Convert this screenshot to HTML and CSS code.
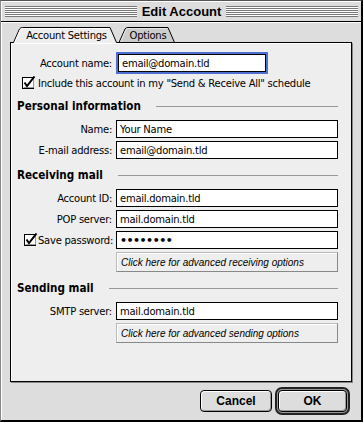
FILE: index.html
```html
<!DOCTYPE html>
<html lang="en">
<head>
    <meta charset="UTF-8">
    <title>Edit Account</title>
    <link rel="stylesheet" href="styles.css">
</head>
<body>

<div class="window">
    <div class="titlebar">
        <span class="stripes"></span>
        <span class="title">Edit Account</span>
        <span class="stripes"></span>
    </div>

    <div class="content">
        <div class="tabs">
            <div class="tab tab-active">
                <svg class="tab-shape" width="108" height="16" viewBox="0 0 108 16">
                    <path d="M3.5 16 L9.5 2 Q10.5 0.5 12.5 0.5 H100 L106.5 16 Z" fill="#eeeeee"/>
                    <path d="M3.5 15.5 L9.5 2 Q10.5 0.5 12.5 0.5 H100 L106.5 15.5" fill="none" stroke="#000"/>
                    <path d="M5 15 L10.5 2.5 Q11.5 1.5 12.5 1.5 H99" fill="none" stroke="#fff"/>
                </svg>
                <span class="tab-label">Account Settings</span>
            </div>
            <div class="tab">
                <svg class="tab-shape" width="62" height="16" viewBox="0 0 62 16">
                    <path d="M3 15 L9 2 Q10 0.5 12 0.5 H52 L58.5 15 Z" fill="#cccccc"/>
                    <path d="M3 15.5 L9 2 Q10 0.5 12 0.5 H52 L58.5 15.5" fill="none" stroke="#000"/>
                    <path d="M4.5 15 L10 2.5 Q11 1.5 12 1.5 H51" fill="none" stroke="#e6e6e6"/>
                </svg>
                <span class="tab-label">Options</span>
            </div>
        </div>

        <div class="panel">
            <div class="row">
                <label class="field-label">Account name:</label>
                <input class="field field-short field-focus" type="text" value="email@domain.tld">
            </div>
            <div class="check-row">
                <svg class="checkbox" width="14" height="14" viewBox="0 0 14 14">
                    <rect x="0.5" y="1.5" width="11" height="11" fill="#fff" stroke="#000"/>
                    <path d="M1.5 11.5 H11.5 V2.5" fill="none" stroke="#999"/>
                    <path d="M2.5 6.5 L5 10 L12.5 0.5" fill="none" stroke="#000" stroke-width="2"/>
                </svg>
                <span>Include this account in my "Send &amp; Receive All" schedule</span>
            </div>

            <div class="section">Personal information</div>
            <div class="row">
                <label class="field-label">Name:</label>
                <input class="field" type="text" value="Your Name">
            </div>
            <div class="row row-next">
                <label class="field-label">E-mail address:</label>
                <input class="field" type="text" value="email@domain.tld">
            </div>

            <div class="section">Receiving mail</div>
            <div class="row">
                <label class="field-label">Account ID:</label>
                <input class="field" type="text" value="email.domain.tld">
            </div>
            <div class="row row-next">
                <label class="field-label">POP server:</label>
                <input class="field" type="text" value="mail.domain.tld">
            </div>
            <div class="row row-next">
                <label class="field-label field-label-check">
                    <svg class="checkbox" width="14" height="14" viewBox="0 0 14 14">
                        <rect x="0.5" y="1.5" width="11" height="11" fill="#fff" stroke="#000"/>
                        <path d="M1.5 11.5 H11.5 V2.5" fill="none" stroke="#999"/>
                        <path d="M2.5 6.5 L5 10 L12.5 0.5" fill="none" stroke="#000" stroke-width="2"/>
                    </svg>
                    <span>Save password:</span>
                </label>
                <input class="field field-password" type="text" value="&#8226;&#8226;&#8226;&#8226;&#8226;&#8226;&#8226;&#8226;">
            </div>
            <button class="adv-btn">Click here for advanced receiving options</button>

            <div class="section">Sending mail</div>
            <div class="row">
                <label class="field-label">SMTP server:</label>
                <input class="field" type="text" value="mail.domain.tld">
            </div>
            <button class="adv-btn">Click here for advanced sending options</button>
        </div>

        <div class="actions">
            <button class="btn">Cancel</button>
            <span class="default-ring"><button class="btn btn-ok">OK</button></span>
        </div>
    </div>
</div>

</body>
</html>
```

FILE: styles.css
```css
* {
    box-sizing: border-box;
}

body {
    margin: 0;
    font-family: 'DejaVu Sans', sans-serif;
    font-size: 10px;
    letter-spacing: -0.25px;
    color: #000;
    background-color: #dddddd;
}

.window {
    width: 363px;
    height: 422px;
    display: flex;
    flex-direction: column;
    background-color: #dddddd;
    border-style: solid;
    border-width: 1px 2px 2px 1px;
    border-color: #555 #000 #000 #888;
}

/* title bar */
.titlebar {
    height: 21px;
    display: flex;
    align-items: center;
    padding: 0 3px 0 4px;
    border-bottom: 1px solid #000;
    box-shadow: inset 1px 1px 0 #fff;
}

.stripes {
    flex: 1;
    height: 11px;
    background: repeating-linear-gradient(to bottom, #777 0 1px, #fff 1px 2px);
}

.title {
    padding: 0 5px;
    font-family: 'Liberation Sans', sans-serif;
    font-weight: bold;
    font-size: 13px;
    letter-spacing: 0;
}

/* window body */
.content {
    flex: 1;
    display: flex;
    flex-direction: column;
    padding: 5px 9px 5px 9px;
    box-shadow: inset 1px 1px 0 #fff;
}

.tabs {
    display: flex;
    height: 16px;
    position: relative;
    z-index: 1;
}

.tab {
    position: relative;
    width: 62px;
    height: 16px;
    display: flex;
    align-items: center;
    justify-content: center;
    margin-left: -2px;
    padding: 2px 0 0 2px;
}

.tab-active {
    width: 108px;
    margin-left: 0;
    padding-left: 5px;
    z-index: 1;
}

.tab-shape {
    position: absolute;
    left: 0;
    top: 0;
}

.tab-label {
    position: relative;
    line-height: 12px;
}

.panel {
    flex: 1;
    margin-top: -1px;
    padding: 11px 13px 0 6px;
    background-color: #eeeeee;
    border: 1px solid #000;
    box-shadow: 1px 1px 0 #888, inset 1px 1px 0 #fff;
}

.row {
    display: flex;
    align-items: center;
    height: 18px;
    margin-top: 6px;
}

.row:first-child {
    margin-top: 0;
}

.row-next {
    margin-top: 3px;
}

.field-label {
    width: 95px;
    margin-right: 4px;
    text-align: right;
    white-space: nowrap;
}

.field-label-check {
    display: flex;
    align-items: center;
    justify-content: space-between;
    padding-left: 7px;
}

.field {
    width: 222px;
    height: 18px;
    margin: 0;
    padding: 0 3px;
    border: 1px solid #000;
    border-radius: 0;
    background-color: #fff;
    font-family: inherit;
    font-size: 10px;
    letter-spacing: -0.25px;
    color: #000;
    outline: none;
}

.field-short {
    width: 148px;
    margin-left: 2px;
}

.field-focus {
    outline: 2px solid #4f6fd0;
}

.field-password {
    font-weight: bold;
    font-size: 11px;
    letter-spacing: -0.5px;
}

.check-row {
    display: flex;
    align-items: center;
    height: 14px;
    margin-top: 4px;
    padding-left: 5px;
    white-space: nowrap;
}

.check-row .checkbox {
    margin-right: 2px;
}

.checkbox {
    flex: none;
}

.section {
    display: flex;
    align-items: center;
    height: 16px;
    margin-top: 8px;
    font-weight: bold;
    font-size: 11.6px;
    letter-spacing: 0;
    font-family: 'DejaVu Sans Condensed', 'DejaVu Sans', sans-serif;
}

.section::after {
    content: '';
    flex: 1;
    margin-left: 15px;
    border-top: 1px solid #999;
}

.adv-btn {
    display: block;
    width: 222px;
    height: 20px;
    margin: 3px 0 0 99px;
    padding: 0 0 0 4px;
    text-align: left;
    font-family: 'Liberation Sans', sans-serif;
    font-style: italic;
    font-size: 10px;
    color: #000;
    background-color: #eeeeee;
    border: 1px solid;
    border-color: #bbb #888 #888 #bbb;
    box-shadow: inset 1px 1px 0 #fff;
}

/* dialog buttons */
.actions {
    display: flex;
    align-items: center;
    justify-content: flex-end;
    height: 28px;
    margin-top: 5px;
    padding-right: 2px;
}

.btn {
    width: 72px;
    height: 22px;
    padding: 0;
    font-family: 'Liberation Sans', sans-serif;
    font-weight: bold;
    font-size: 12px;
    color: #000;
    background-color: #dddddd;
    border: 1px solid #000;
    border-radius: 4px;
    box-shadow: inset 1px 1px 0 #fff, inset -1px -1px 0 #999;
}

.default-ring {
    margin-left: 3px;
    padding: 1px;
    border: 2px solid #222;
    border-radius: 7px;
    background-color: #999;
}

.btn-ok {
    display: block;
    width: 69px;
}
```
